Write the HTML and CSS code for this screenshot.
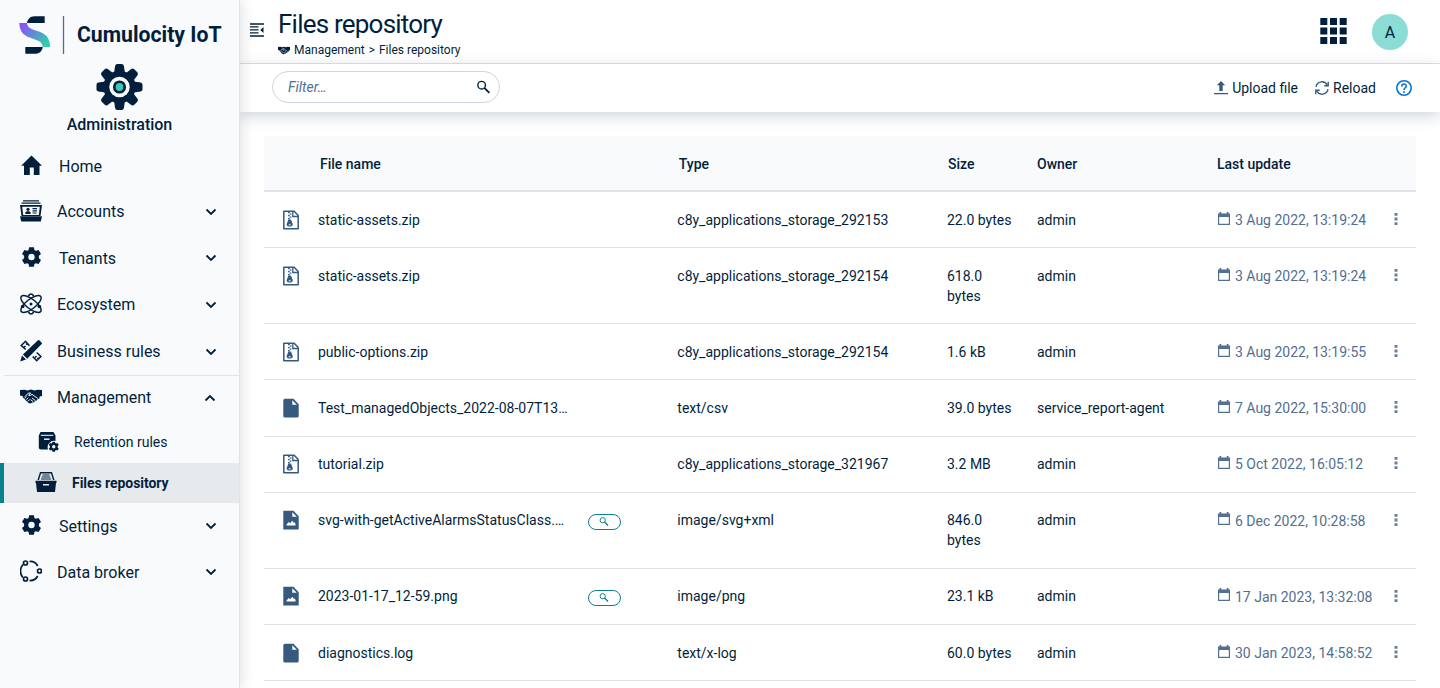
FILE: index.html
```
<!DOCTYPE html>
<html lang="en">
<head>
<meta charset="utf-8">
<title>Files repository</title>
<link rel="stylesheet" href="styles.css">
</head>
<body>
<svg class="defs" aria-hidden="true">
  <symbol id="chev" viewBox="0 0 12 12"><path d="M1.500 3.500 6 8l4.500-4.500" fill="none" stroke="currentColor" stroke-width="1.800"/></symbol>
  <symbol id="cog" viewBox="0 0 20 20"><path fill-rule="evenodd" d="M7.600.3h4.800l.5 2.600 1.500.9 2.700-.9 2.400 4-2.100 1.800v2.600l2.100 1.800-2.400 4-2.700-.9-1.500.9-.5 2.600H7.600l-.5-2.600-1.500-.9-2.700.9-2.400-4 2.100-1.800V8.700L.5 6.900l2.400-4 2.700.9 1.500-.9zM10 6.800a3.200 3.200 0 1 0 0 6.400 3.200 3.200 0 0 0 0-6.400z"/></symbol>
  <symbol id="hands" viewBox="0 0 22 15"><path d="M0 1 4.500.8l3 .7L11 .6l3.500.9 3-.7L22 1v6l-2.200.5-.6 2.200-1.600.4-.7 1.500-1.700.3-1.200 1.500-2 .2-1 1-2.500-.6-2-2L3 8.500 2.500 7 0 6.500z"/><path d="M5 7.500 8.500 4h2.200L8.500 6.300q1.500 1 3.500-1l5.700 4.200M4.500 9l2-1.500M6.200 10.700l2-2M8 12.300l2-2M12 9l3.500 2.700M10.700 10.700l2.800 2.200" stroke="#f9fafc" stroke-width="1" fill="none"/></symbol>
  <symbol id="mag" viewBox="0 0 14 14"><g fill="none" stroke="currentColor"><circle cx="5" cy="5" r="4.100" stroke-width="1.500"/><path d="m7.900 7.900 5.400 5.400" stroke-width="2"/></g></symbol>
  <symbol id="zip" viewBox="0 0 16 20"><path d="M.8 1.200h10.400l4 4.300V18.800H.8z" fill="none" stroke="currentColor" stroke-width="1.500" stroke-linejoin="round"/><path d="M9.800 1v5.500H15" fill="none" stroke="currentColor" stroke-width="1.300"/><path d="M5 2h1.700v1.300H5zM6.700 3.500h1.700v1.300H6.700zM5 5h1.700v1.300H5zM6.700 6.500h1.700v1.300H6.700zM5 8h1.700v1.300H5zM5.400 9.400h2.600l1.800 4.800c.5 3.200-6.700 3.200-6.200 0z"/><path d="M5.700 14.800h2" stroke="#fff"/></symbol>
  <symbol id="file" viewBox="0 0 16 20"><path d="M2 .8h8.500L15.700 6.200V18q0 1.500-1.500 1.500h-12.500Q.3 19.500.3 18V2.500Q.3.800 2 .8z"/><path d="M9.300 2.200v4.500h4.500z" fill="#fff"/></symbol>
  <symbol id="image" viewBox="0 0 16 20"><path d="M.3.800h10.200L15.700 6.200V19.500H.3z"/><path d="M9.300 2.200v4.500h4.500zM3.500 15.400v-1l2.300-2.500 1.500 1.400 2-2.600 1.700 2.400.6-.9.900 1.600v1.600z" fill="#fff"/></symbol>
  <symbol id="cal" viewBox="0 0 12 14"><path fill-rule="evenodd" d="M0 1.500h1.500V0h1.800v1.500h5.400V0h1.800v1.500H12V13H0zm1.200 3.500v6.800h9.600V5z"/></symbol>
  <symbol id="dots" viewBox="0 0 4 12"><path d="M.5 0h3v2.800h-3zM.5 4.600h3v2.800h-3zM.5 9.200h3V12h-3z"/></symbol>
</svg>
<div class="app">
  <aside class="sidebar">
    <div class="brand">
      <svg class="logo" viewBox="0 0 46 38"><defs><linearGradient id="g" x1="0" y1="0" x2="1" y2=".6"><stop offset="0" stop-color="#9445ff"/><stop offset=".5" stop-color="#6388d5"/><stop offset="1" stop-color="#36c9ae"/></linearGradient></defs><path d="M8 7C8.500 3 11 .2 15.500 .2h10.200V7z" fill="#011f3d"/><path d="M.3 7H8c.5 4.500 3 5.500 9.500 7.700 9 2.800 13.200 6 13.700 16.300h-7.500c-.3-4.500-3-6-9-8C5.500 20 .8 17 .3 7z" fill="url(#g)"/><path d="M6.300 31h17.500c-.7 4-3.300 6.800-8 6.800H6.300z" fill="#011f3d"/><path d="M44.500 0v38" stroke="#4f6f91" stroke-width="1.300"/></svg>
      <span>Cumulocity IoT</span>
    </div>
    <div class="app-name">
      <svg class="big-cog" viewBox="-24 -24 48 48"><defs><path id="t" d="M-5.500-14.500-4.500-21.500q.4-2 2.300-2h4.400q1.900 0 2.300 2l1 7z"/></defs><use href="#t"/><use href="#t" transform="rotate(45)"/><use href="#t" transform="rotate(90)"/><use href="#t" transform="rotate(135)"/><use href="#t" transform="rotate(180)"/><use href="#t" transform="rotate(225)"/><use href="#t" transform="rotate(270)"/><use href="#t" transform="rotate(315)"/><circle r="16.500"/><circle r="10.500" fill="#f9fafc"/><circle r="6.700"/><circle r="4" fill="#3dc5b5"/></svg>
      <span>Administration</span>
    </div>
    <nav>
      <a class="item wide"><svg class="ico" viewBox="0 0 22 22"><path d="M11.500 1.500 22 11.700H19.500V21h-5.700v-7.500h-4V21H4v-9.300H1.200z"/></svg><span>Home</span></a>
      <a class="item"><svg class="ico" viewBox="0 0 22 22"><path d="M3 .3h16v1.200H3zM1.500 2.500h19v1.300h-19zM0 5h22L20.500 16h-19z"/><path d="M2.200 6.700h17.600l-1 8.300H3.200z" fill="#f9fafc"/><circle cx="8" cy="9.300" r="1.600"/><path d="M5.300 14v-1.500q.7-1.300 2-1.300h1.500q1.300 0 1.800 1.300V14zM12.500 8H17v1.200h-4.500zM12.500 10.200H17v1.200h-4.500zM12.500 12.400h4v1.200h-4zM0 16.200h22L20.800 21.500H1.200z"/></svg><span>Accounts</span><svg class="chev"><use href="#chev"/></svg></a>
      <a class="item wide"><svg class="ico cog" viewBox="-1.500 0 22 20"><use href="#cog" width="20" height="20"/></svg><span>Tenants</span><svg class="chev"><use href="#chev"/></svg></a>
      <a class="item tall"><svg class="ico" viewBox="0 0 22 22"><g fill="none" stroke="currentColor" stroke-width="1.500"><ellipse cx="11" cy="11" rx="12.300" ry="4.800" transform="rotate(38 11 11)"/><ellipse cx="11" cy="11" rx="12.300" ry="4.800" transform="rotate(-38 11 11)"/><path d="M8.300 3Q11-1 13.700 3M8.300 19q2.700 4 5.400 0"/></g><circle cx="11" cy="11" r="1.500"/><circle cx="2.700" cy="13.500" r="1.800"/><circle cx="19.300" cy="13.500" r="1.800"/></svg><span>Ecosystem</span><svg class="chev"><use href="#chev"/></svg></a>
      <a class="item tall"><svg class="ico" viewBox="0 0 22 22"><path d="m19.300.3 2.400 2.400q.6.600 0 1.300L7.200 18.800l-4.300-4.300L18 .3q.7-.6 1.300 0zM2 15.600 6 19.600.2 21.500z"/><g fill="none" stroke="currentColor" stroke-width="1.600"><path d="M9.500 5.700 5.500 1.300 1.300 5.500l4.400 4M4 7.500l1.500-1.500M6 4.500l1.500-1.500M12.700 16.500l4 4.200 4.200-4.200-4.200-4M15 17.500l1.500-1.500M17.300 19l1.300-1.300"/></g></svg><span>Business rules</span><svg class="chev"><use href="#chev"/></svg></a>
      <div class="divider"></div>
      <a class="item short"><svg class="ico hands"><use href="#hands"/></svg><span>Management</span><svg class="chev up"><use href="#chev"/></svg></a>
      <a class="sub retention"><svg class="ico" viewBox="0 0 22 22"><path d="M3.500 1h13l2 3.500V10a6.500 6.500 0 0 0-7.500 8.500H4q-2.200 0-2.200-2V4.500z"/><path d="M3.800 4.300h12.500" stroke="#f9fafc" stroke-width="1"/><path d="M7 8.200h5.500" stroke="#f9fafc" stroke-width="1.400"/><svg x="11.500" y="10.500" width="10.500" height="10.500" viewBox="0 0 20 20"><use href="#cog"/></svg></svg><span>Retention rules</span></a>
      <a class="sub active"><svg class="ico" viewBox="0 0 22 22"><path d="M5 1h12l2.500 8H18L16 2.500H6L4 9H2.500z"/><path d="M7.500 4h7M6.700 6h8.600M6 8h10" stroke="currentColor" stroke-width="1"/><path fill-rule="evenodd" d="M.5 9.700h21V12H21L20 21H2L1 12H.5zM8 13v1.600h6V13z"/></svg><span>Files repository</span></a>
      <a class="item wide"><svg class="ico cog" viewBox="-1.500 0 22 20"><use href="#cog" width="20" height="20"/></svg><span>Settings</span><svg class="chev"><use href="#chev"/></svg></a>
      <a class="item broker"><svg class="ico" viewBox="0 0 22 22"><g fill="none" stroke="currentColor" stroke-width="1.700"><path d="M3 4.500A10 10 0 0 0 2.800 17.500M9.500 1.500q5.500-.5 8.200 4.500M9.500 20.500q5.500.5 8.200-4.500"/><circle cx="5.500" cy="3" r="2"/><circle cx="5.500" cy="19" r="2"/><circle cx="19.500" cy="11" r="2"/></g></svg><span>Data broker</span><svg class="chev"><use href="#chev"/></svg></a>
    </nav>
  </aside>
  <main>
    <header class="top">
      <svg class="collapse" viewBox="0 0 14 14"><path d="M0 .3h14v1.400H0zM0 3.300h8.500v1.300H0zM0 6.300h8.500v1.300H0zM0 9.300h8.500v1.300H0zM0 12.300h14v1.400H0zM13.500 4v6L10.300 7z"/></svg>
      <div class="titles">
        <h1>Files repository</h1>
        <div class="crumbs"><svg><use href="#hands"/></svg><span>Management</span><span class="gt">&gt;</span><span>Files repository</span></div>
      </div>
      <svg class="grid" viewBox="0 0 27 26"><path d="M.3 0h7v7h-7zM10 0h7v7h-7zM19.700 0h7v7h-7zM.3 9.600h7v7h-7zM10 9.600h7v7h-7zM19.700 9.600h7v7h-7zM.3 19h7v7h-7zM10 19h7v7h-7zM19.700 19h7v7h-7z"/></svg>
      <div class="avatar">A</div>
    </header>
    <div class="bar">
      <div class="search"><span>Filter…</span><svg><use href="#mag"/></svg></div>
      <div class="actions">
        <svg class="up-ico" viewBox="0 0 14 14"><path d="m7 0 4.200 4.300H8.700V10H5.300V4.300H2.800zM0 12h14v1.300H0z"/></svg><span>Upload file</span>
        <svg class="re-ico" viewBox="0 0 14 14"><g fill="none" stroke="currentColor" stroke-width="1.400"><path d="M1 5.800A6 6 0 0 1 12.200 4M13 8.200A6 6 0 0 1 1.800 10"/><path d="M13.200.8v4H9.300M.8 13.200v-4h3.900"/></g></svg><span>Reload</span>
        <svg class="help" viewBox="0 0 16 16"><g fill="none" stroke="currentColor" stroke-width="1.600"><circle cx="8" cy="8" r="7.200"/><path d="M5.700 6.500C5.700 3 10.400 3.300 10.300 6.100 10.200 7.700 8 7.900 8 10"/></g><circle cx="8" cy="12" r="1"/></svg>
      </div>
    </div>
    <section class="table">
      <div class="row head"><span></span><span>File name</span><span></span><span>Type</span><span>Size</span><span>Owner</span><span>Last update</span><span></span></div>
      <div class="row"><svg class="f"><use href="#zip"/></svg><span>static-assets.zip</span><i></i><span>c8y_applications_storage_292153</span><span>22.0 bytes</span><span>admin</span><span class="date"><svg><use href="#cal"/></svg>3 Aug 2022, 13:19:24</span><svg class="dots"><use href="#dots"/></svg></div>
      <div class="row two"><svg class="f"><use href="#zip"/></svg><span>static-assets.zip</span><i></i><span>c8y_applications_storage_292154</span><span>618.0<br>bytes</span><span>admin</span><span class="date"><svg><use href="#cal"/></svg>3 Aug 2022, 13:19:24</span><svg class="dots"><use href="#dots"/></svg></div>
      <div class="row"><svg class="f"><use href="#zip"/></svg><span>public-options.zip</span><i></i><span>c8y_applications_storage_292154</span><span>1.6 kB</span><span>admin</span><span class="date"><svg><use href="#cal"/></svg>3 Aug 2022, 13:19:55</span><svg class="dots"><use href="#dots"/></svg></div>
      <div class="row long"><svg class="f"><use href="#file"/></svg><span>Test_managedObjects_2022-08-07T13…</span><i></i><span>text/csv</span><span>39.0 bytes</span><span>service_report-agent</span><span class="date"><svg><use href="#cal"/></svg>7 Aug 2022, 15:30:00</span><svg class="dots"><use href="#dots"/></svg></div>
      <div class="row tight"><svg class="f"><use href="#zip"/></svg><span>tutorial.zip</span><i></i><span>c8y_applications_storage_321967</span><span>3.2 MB</span><span>admin</span><span class="date"><svg><use href="#cal"/></svg>5 Oct 2022, 16:05:12</span><svg class="dots"><use href="#dots"/></svg></div>
      <div class="row two tight preview"><svg class="f"><use href="#image"/></svg><span>svg-with-getActiveAlarmsStatusClass.…</span><b class="pill"><svg><use href="#mag"/></svg></b><span>image/svg+xml</span><span>846.0<br>bytes</span><span>admin</span><span class="date"><svg><use href="#cal"/></svg>6 Dec 2022, 10:28:58</span><svg class="dots"><use href="#dots"/></svg></div>
      <div class="row tight preview"><svg class="f"><use href="#image"/></svg><span>2023-01-17_12-59.png</span><b class="pill"><svg><use href="#mag"/></svg></b><span>image/png</span><span>23.1 kB</span><span>admin</span><span class="date"><svg><use href="#cal"/></svg>17 Jan 2023, 13:32:08</span><svg class="dots"><use href="#dots"/></svg></div>
      <div class="row"><svg class="f"><use href="#file"/></svg><span>diagnostics.log</span><i></i><span>text/x-log</span><span>60.0 bytes</span><span>admin</span><span class="date"><svg><use href="#cal"/></svg>30 Jan 2023, 14:58:52</span><svg class="dots"><use href="#dots"/></svg></div>
    </section>
  </main>
</div>
</body>
</html>
```

FILE: styles.css
```
* { box-sizing: border-box; }
body { margin: 0; font: 14px/20px Roboto, sans-serif; color: #011f3d; background: #fff; overflow: hidden; }
svg { display: block; fill: currentColor; flex: none; }
.defs { display: none; }
.app { display: flex; height: 688px; overflow: hidden; }

.sidebar { width: 240px; flex: none; background: #f9fafc; border-right: 1px solid #e0e3e8; box-shadow: 0 0 14px rgba(1, 31, 61, .17); z-index: 2; }
.brand { display: flex; align-items: center; height: 54px; padding: 16px 0 0 19px; font-size: 21.2px; font-weight: 700; line-height: 38px; }
.brand span { white-space: nowrap; margin: 0 0 0 12px; }
.logo { width: 46px; height: 38px; }
.app-name { display: flex; flex-direction: column; align-items: center; height: 89px; padding-top: 9px; font-size: 16px; font-weight: 500; line-height: 24px; }
.big-cog { width: 47px; height: 48px; margin-bottom: 2px; }
.item { display: flex; align-items: center; height: 46px; padding: 0 22px 0 20px; font-size: 16px; line-height: 24px; }
.item span { margin-left: 15px; flex: 1; }
.wide span { margin: 2px 0 0 17px; }
.broker span { margin-top: 2px; }
.tall { height: 47px; }
.short { height: 45px; padding-bottom: 2px; }
.ico { width: 22px; height: 22px; }
.item .ico { margin-top: -2px; }
.item .cog { height: 20px; }
.item .hands { height: 15px; }
.chev { width: 12px; height: 12px; }
.up { transform: rotate(180deg); margin-right: 1px; }
.divider { height: 1px; background: #e0e3e8; margin-left: 4px; }
.sub { display: flex; align-items: center; height: 42px; padding-left: 37px; }
.sub span { margin-left: 15px; }
.active { height: 40px; padding-left: 31px; border-left: 4px solid #08808d; background: #e7eaed; font-weight: 700; letter-spacing: -.05px; }
.active .ico { margin-top: -2px; }

main { flex: 1; min-width: 0; }
.top { display: flex; height: 64px; border-bottom: 1px solid #e0e3e8; padding: 0 32px 0 10px; }
.collapse { width: 14px; height: 14px; margin-top: 23px; }
.titles { margin-left: 14px; flex: 1; }
h1 { margin: 8px 0 0; font-size: 26px; line-height: 32px; font-weight: 400; letter-spacing: -.78px; }
.crumbs { display: flex; align-items: center; font-size: 12px; line-height: 20px; }
.crumbs svg { width: 12px; height: 9px; margin-right: 4px; }
.gt { margin: 0 4px; }
.grid { width: 27px; height: 26px; margin: 18px 25px 0 0; }
.avatar { width: 36px; height: 36px; margin-top: 14px; border-radius: 50%; background: #8bdcd5; text-align: center; font-size: 16px; line-height: 37px; }
.bar { display: flex; justify-content: space-between; height: 48px; padding: 7px 28px 0 32px; box-shadow: 0 4px 14px rgba(1, 31, 61, .19); }
.search { display: flex; align-items: center; justify-content: space-between; width: 228px; height: 32px; border: 1px solid #cdd5de; border-radius: 16px; padding: 0 9px 0 15px; font-style: italic; color: #527091; }
.search svg { width: 13px; height: 14px; color: #011f3d; }
.actions { display: flex; align-items: center; height: 34px; }
.up-ico, .re-ico { width: 14px; height: 14px; color: #36597e; }
.up-ico { margin-right: 4px; }
.re-ico { margin: 0 4px 0 17px; }
.help { width: 16px; height: 16px; margin-left: 20px; color: #0873d6; }

.table { margin: 24px 24px 0; }
.row { display: grid; grid-template-columns: 54px 270px 89.300px 269.700px 90px 180px 177px 1fr; align-items: start; height: 56px; padding-top: 18px; border-bottom: 1px solid #e0e3e8; white-space: nowrap; }
.two { height: 76px; }
.long { height: 57px; }
.tight { padding-top: 17px; }
.head { border-bottom: 2px solid #e0e3e8; background: #f9fafc; font-weight: 500; }
.head span:nth-child(2) { padding-left: 2px; }
.head span:nth-child(4) { padding-left: 1.5px; }
.head span:nth-child(5) { padding-left: 1px; }
.f { width: 16px; height: 20px; margin-left: 19px; color: #36597e; }
.date { display: flex; color: #527091; }
.date svg { width: 12px; height: 14px; margin: 2px 5px 0 1px; }
.dots { width: 4px; height: 12px; margin-top: 3px; color: #6b7f96; }
.pill { display: flex; align-items: center; justify-content: center; width: 33px; height: 16px; margin-top: 4px; border: 1px solid #08808d; border-radius: 8px; color: #08808d; }
.pill svg { width: 10px; height: 9px; margin: 0 2px 1px 0; }
.preview .date { padding-top: 1px; }
.preview .date svg { margin-top: 1px; }
.preview .dots { margin-top: 4px; }
```
